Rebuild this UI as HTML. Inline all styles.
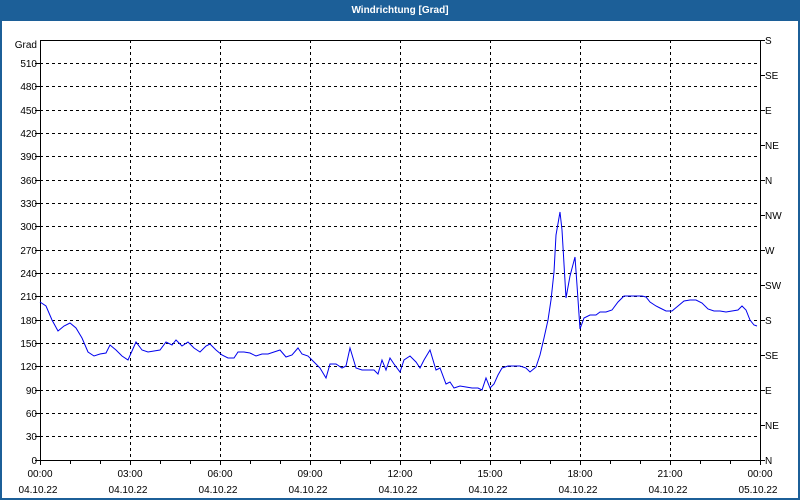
<!DOCTYPE html>
<html><head><meta charset="utf-8"><style>
html,body{margin:0;padding:0;width:800px;height:500px;overflow:hidden;background:#fff}
svg text{font-family:"Liberation Sans",sans-serif;font-size:10px;fill:#000}
</style></head><body>
<svg width="800" height="500" viewBox="0 0 800 500" xmlns="http://www.w3.org/2000/svg">
<rect x="0" y="0" width="800" height="500" fill="#1c5f98"/>
<rect x="2" y="21" width="796" height="477" fill="#fff"/>
<text x="400" y="13" text-anchor="middle" style="fill:#fff;font-weight:bold;font-size:10px">Windrichtung [Grad]</text>
<g stroke="#000" stroke-width="1" stroke-dasharray="3,3" fill="none">
<path d="M40 63.5H760M40 86.5H760M40 110.5H760M40 133.5H760M40 156.5H760M40 180.5H760M40 203.5H760M40 226.5H760M40 250.5H760M40 273.5H760M40 296.5H760M40 320.5H760M40 343.5H760M40 366.5H760M40 390.5H760M40 413.5H760M40 436.5H760"/>
<path d="M130.5 40V460M220.5 40V460M310.5 40V460M400.5 40V460M490.5 40V460M580.5 40V460M670.5 40V460"/>
</g>
<g stroke="#000" stroke-width="1" fill="none">
<path d="M40.5 40V460.5H760.5V40M40 40.5H760"/>
<path d="M40.5 460v5M70.5 460v4M100.5 460v4M130.5 460v5M160.5 460v4M190.5 460v4M220.5 460v5M250.5 460v4M280.5 460v4M310.5 460v5M340.5 460v4M370.5 460v4M400.5 460v5M430.5 460v4M460.5 460v4M490.5 460v5M520.5 460v4M550.5 460v4M580.5 460v5M610.5 460v4M640.5 460v4M670.5 460v5M700.5 460v4M730.5 460v4M760.5 460v5"/>
<path d="M760 40.5h5M760 75.5h5M760 110.5h5M760 145.5h5M760 180.5h5M760 215.5h5M760 250.5h5M760 285.5h5M760 320.5h5M760 355.5h5M760 390.5h5M760 425.5h5M760 460.5h5"/>
<path d="M35 63.5h5M35 86.5h5M35 110.5h5M35 133.5h5M35 156.5h5M35 180.5h5M35 203.5h5M35 226.5h5M35 250.5h5M35 273.5h5M35 296.5h5M35 320.5h5M35 343.5h5M35 366.5h5M35 390.5h5M35 413.5h5M35 436.5h5M35 460.5h5"/>
</g>
<g text-anchor="end">
<text x="37" y="48">Grad</text>
<text x="37" y="67">510</text><text x="37" y="90">480</text><text x="37" y="114">450</text><text x="37" y="137">420</text><text x="37" y="160">390</text><text x="37" y="184">360</text><text x="37" y="207">330</text><text x="37" y="230">300</text><text x="37" y="254">270</text><text x="37" y="277">240</text><text x="37" y="300">210</text><text x="37" y="324">180</text><text x="37" y="347">150</text><text x="37" y="370">120</text><text x="37" y="394">90</text><text x="37" y="417">60</text><text x="37" y="440">30</text><text x="37" y="464">0</text>
</g>
<g>
<text x="765" y="44">S</text><text x="765" y="79">SE</text><text x="765" y="114">E</text><text x="765" y="149">NE</text><text x="765" y="184">N</text><text x="765" y="219">NW</text><text x="765" y="254">W</text><text x="765" y="289">SW</text><text x="765" y="324">S</text><text x="765" y="359">SE</text><text x="765" y="394">E</text><text x="765" y="429">NE</text><text x="765" y="464">N</text>
</g>
<g text-anchor="middle">
<text x="40" y="477">00:00</text><text x="130" y="477">03:00</text><text x="220" y="477">06:00</text><text x="310" y="477">09:00</text><text x="400" y="477">12:00</text><text x="490" y="477">15:00</text><text x="580" y="477">18:00</text><text x="670" y="477">21:00</text><text x="760" y="477">00:00</text>
<text x="38" y="493">04.10.22</text><text x="128" y="493">04.10.22</text><text x="218" y="493">04.10.22</text><text x="308" y="493">04.10.22</text><text x="398" y="493">04.10.22</text><text x="488" y="493">04.10.22</text><text x="578" y="493">04.10.22</text><text x="668" y="493">04.10.22</text><text x="758" y="493">05.10.22</text>
</g>
<polyline fill="none" stroke="#0000ee" stroke-width="1" points="40,302 46,306 52,320 58,331 64,326 70,323 76,328 82,338 88,352 94,356 100,354 106,353 110,345 116,350 122,356 128,360 136,342 142,350 148,352 154,351 160,350 166,342 172,345 176,340 182,346 188,342 194,348 200,352 206,346 210,344 216,350 222,355 228,358 234,358 238,352 244,352 250,353 256,356 262,354 268,354 274,352 280,350 286,357 292,355 298,348 302,354 308,356 314,362 320,368 326,378 330,364 336,364 342,368 346,366 350,348 356,368 362,370 368,370 374,370 378,374 382,360 386,370 390,358 394,364 400,372 404,360 410,356 416,362 420,368 424,360 430,350 436,370 440,368 446,384 450,382 454,388 460,386 466,387 472,388 478,388 482,390 486,378 490,388 494,384 498,375 502,368 508,366 514,366 520,366 526,368 530,372 536,367 540,355 544,338 548,320 551,300 554,272 556,235 560,212 562,230 566,298 570,276 575,257 577,285 580,329 584,318 590,315 596,315 600,312 606,312 612,310 618,302 624,296 630,296 636,296 642,296 646,297 650,302 656,306 660,308 666,311 672,311 678,306 684,301 690,300 696,300 702,303 708,309 714,311 720,311 726,312 732,311 738,310 742,306 746,310 750,320 754,325 757,326"/>
</svg>
</body></html>
